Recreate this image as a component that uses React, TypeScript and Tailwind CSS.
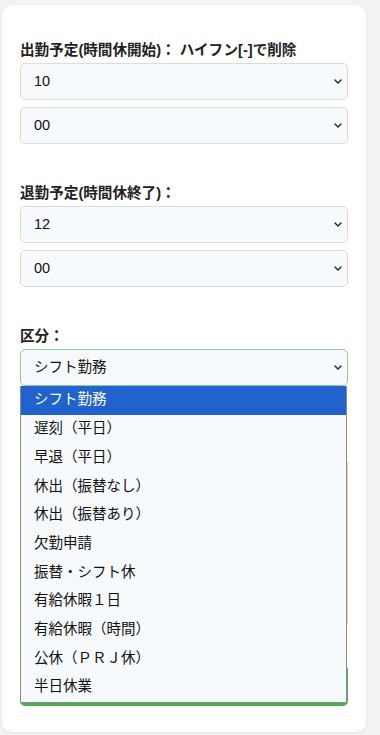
import { useState } from 'react';

const hours = ['10', '12'];

const kubunOptions = [
  'シフト勤務',
  '遅刻（平日）',
  '早退（平日）',
  '休出（振替なし）',
  '休出（振替あり）',
  '欠勤申請',
  '振替・シフト休',
  '有給休暇１日',
  '有給休暇（時間）',
  '公休（ＰＲＪ休）',
  '半日休業',
];

function Chevron() {
  return (
    <svg width="8" height="5" viewBox="0 0 8 5" className="shrink-0">
      <path d="M1 1 4 4 7 1" fill="none" stroke="#222" strokeWidth="1.4" strokeLinecap="round" />
    </svg>
  );
}

function FakeSelect({ value, focused }: { value: string; focused?: boolean }) {
  return (
    <div
      className={`flex h-[37px] items-center justify-between rounded-[5px] border bg-[#f7fafc] pl-[13px] pr-[5px] text-[14.5px] text-[#111] ${
        focused ? 'border-[#8fd08f]' : 'border-[#dcdcdc]'
      }`}
    >
      <span>{value}</span>
      <Chevron />
    </div>
  );
}

export default function App() {
  const [selected] = useState(0);

  return (
    <div className="min-h-screen bg-[#f2f2f2] pl-[2px] pt-[5px] font-['Liberation_Sans','Noto_Sans_CJK_JP',sans-serif] text-[#222]">
      <div className="w-[364px] rounded-[10px] bg-white px-[18px] pb-[26px] pt-[35px] shadow-[0_1px_3px_rgba(0,0,0,0.06)]">
        <label className="block text-[14.6px] font-bold leading-5">出勤予定(時間休開始)： ハイフン[-]で削除</label>
        <div className="mt-[3px] flex flex-col gap-[7px]">
          <FakeSelect value={hours[0]} />
          <FakeSelect value="00" />
        </div>

        <label className="mt-[39px] block text-[14.6px] font-bold leading-5">退勤予定(時間休終了)：</label>
        <div className="mt-[3px] flex flex-col gap-[7px]">
          <FakeSelect value={hours[1]} />
          <FakeSelect value="00" />
        </div>

        <label className="mt-[39px] block text-[14.6px] font-bold leading-5">区分：</label>
        <div className="relative mt-[3px]">
          <FakeSelect value={kubunOptions[selected]} focused />

          {/* open native list */}
          <ul className="absolute left-0 top-full z-10 w-[327px] border-x border-b border-[#8c8c8c] bg-[#f7fafc] text-[14.5px] text-[#111]">
            {kubunOptions.map((o, i) => (
              <li
                key={o}
                className={`flex h-[28.7px] items-center pl-[13px] ${i === selected ? 'bg-[#2262cc] text-white' : ''}`}
              >
                {o}
              </li>
            ))}
          </ul>
        </div>

        <textarea className="mt-[72px] block h-[169px] w-full resize-none rounded-[5px] border border-[#dcdcdc] bg-[#f7fafc]" />

        <button className="mt-[38px] block h-[41px] w-full rounded-[5px] bg-[#4caf50] font-bold text-white">
          送信
        </button>
      </div>
    </div>
  );
}
